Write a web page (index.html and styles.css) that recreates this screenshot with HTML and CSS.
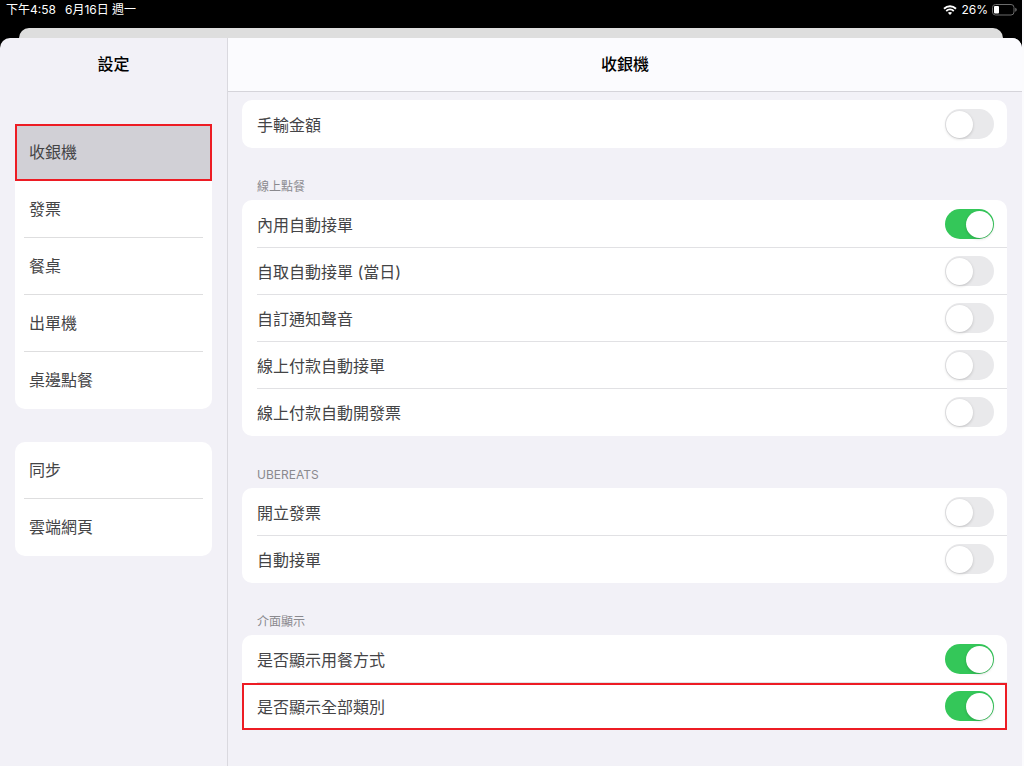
FILE: index.html
```html
<!DOCTYPE html>
<html lang="zh-Hant">
<head>
<meta charset="utf-8">
<meta name="viewport" content="width=device-width, initial-scale=1">
<title>設定</title>
<link rel="stylesheet" href="styles.css">
</head>
<body>
<div class="screen">
  <header class="status">
    <div class="status-left"><span>下午4:58</span><span>6月16日 週一</span></div>
    <div class="status-right">
      <svg class="wifi" width="14" height="10" viewBox="0 0 14 10" aria-hidden="true">
        <path d="M1 3.7C4.5.5 9.5.5 13 3.7" fill="none" stroke="#fff" stroke-width="1.9"/>
        <path d="M3.2 6C5.4 4 8.6 4 10.8 6" fill="none" stroke="#fff" stroke-width="1.8"/>
        <path d="M4.9 7.8Q7 6.1 9.1 7.8L7 9.9Z" fill="#fff"/>
      </svg>
      <span>26%</span>
      <svg class="battery" width="25" height="12" viewBox="0 0 25 12" aria-hidden="true">
        <rect x=".5" y=".5" width="21.5" height="10.5" rx="3" fill="none" stroke="#6b6b6b"/>
        <rect x="2" y="2" width="5" height="7.5" rx="1" fill="#fff"/>
        <path d="M23.2 3.8Q24.8 4.4 24.8 5.8T23.2 7.8Z" fill="#6b6b6b"/>
      </svg>
    </div>
  </header>
  <div class="back-sheet"></div>
  <div class="sheet">
    <aside class="sidebar">
      <h1 class="title">設定</h1>
      <nav class="menu">
        <div class="menu-card">
          <a class="menu-item selected" href="#pos" aria-current="page">收銀機</a>
          <a class="menu-item" href="#invoice">發票</a>
          <a class="menu-item" href="#table">餐桌</a>
          <a class="menu-item" href="#printer">出單機</a>
          <a class="menu-item" href="#tableside">桌邊點餐</a>
        </div>
        <div class="menu-card">
          <a class="menu-item" href="#sync">同步</a>
          <a class="menu-item" href="#cloud">雲端網頁</a>
        </div>
      </nav>
    </aside>
    <main class="content">
      <div class="content-bar"><h2 class="title">收銀機</h2></div>
      <div class="groups">
        <section class="card">
          <label class="row"><span class="row-inner">手輸金額<input class="switch" type="checkbox" role="switch"></span></label>
        </section>
        <h3 class="group-title">線上點餐</h3>
        <section class="card">
          <label class="row"><span class="row-inner">內用自動接單<input class="switch" type="checkbox" role="switch" checked></span></label>
          <label class="row"><span class="row-inner">自取自動接單 (當日)<input class="switch" type="checkbox" role="switch"></span></label>
          <label class="row"><span class="row-inner">自訂通知聲音<input class="switch" type="checkbox" role="switch"></span></label>
          <label class="row"><span class="row-inner">線上付款自動接單<input class="switch" type="checkbox" role="switch"></span></label>
          <label class="row"><span class="row-inner">線上付款自動開發票<input class="switch" type="checkbox" role="switch"></span></label>
        </section>
        <h3 class="group-title">UBEREATS</h3>
        <section class="card">
          <label class="row"><span class="row-inner">開立發票<input class="switch" type="checkbox" role="switch"></span></label>
          <label class="row"><span class="row-inner">自動接單<input class="switch" type="checkbox" role="switch"></span></label>
        </section>
        <h3 class="group-title">介面顯示</h3>
        <section class="card">
          <label class="row"><span class="row-inner">是否顯示用餐方式<input class="switch" type="checkbox" role="switch" checked></span></label>
          <label class="row marked"><span class="row-inner">是否顯示全部類別<input class="switch" type="checkbox" role="switch" checked></span></label>
        </section>
      </div>
    </main>
  </div>
</div>
</body>
</html>
```
FILE: styles.css
```css
* { box-sizing: border-box; }

body {
  margin: 0;
  padding-right: 2px;
  background: #fbfbfd;
  color: #444446;
  font-family: Inter, "Noto Sans CJK TC", sans-serif;
  font-size: 16px;
}

.screen {
  display: flex;
  flex-direction: column;
  min-height: 100vh;
  background: #000;
}

.status {
  display: flex;
  justify-content: space-between;
  height: 28px;
  padding: 0 5px 0 6px;
  color: #fff;
  font-size: 12px;
  line-height: 19px;
}

.status-left { display: flex; gap: 9px; }

.status-right {
  display: flex;
  align-items: center;
  gap: 4px;
  height: 19px;
}

.back-sheet {
  height: 10px;
  margin: 0 19px;
  border-radius: 10px 10px 0 0;
  background: #dedede;
}

.sheet {
  display: flex;
  flex: 1;
  overflow: hidden;
  border-radius: 10px 10px 0 0;
  background: #f2f1f7;
}

.sidebar {
  flex: none;
  width: 228px;
  border-right: 1px solid #dad9df;
}

.title {
  margin: 0;
  color: #000;
  font-size: 16px;
  font-weight: 500;
  line-height: 53px;
  text-align: center;
}

.menu {
  display: flex;
  flex-direction: column;
  gap: 33px;
  padding: 33px 15px;
}

.menu-card {
  border-radius: 10px;
  background: #fff;
}

.menu-item {
  display: block;
  position: relative;
  padding: 0 14px;
  color: inherit;
  line-height: 57px;
  text-decoration: none;
}

.menu-item:not(:last-child)::after {
  content: "";
  position: absolute;
  right: 9px;
  bottom: 0;
  left: 9px;
  height: 1px;
  background: #dededf;
}

.menu-item.selected {
  outline: 2px solid #ed1c24;
  outline-offset: -2px;
  background: #d1d0d6;
}

.menu-item.selected::after { display: none; }

.menu-card:first-child { border-radius: 0 0 10px 10px; }

.content { flex: 1; }

.content-bar {
  border-bottom: 1px solid #d5d4da;
  background: #fbfbfe;
}

.groups { padding: 8px 15px 30px 14px; }

.card {
  padding-top: 1px;
  border-radius: 10px;
  background: #fff;
}

.row {
  display: block;
  padding-left: 15px;
}

.row-inner {
  display: flex;
  align-items: center;
  justify-content: space-between;
  height: 47px;
  padding-right: 13px;
  border-bottom: 1px solid #e1e1e4;
}

.row:last-child .row-inner { border-bottom-color: transparent; }

.row.marked {
  outline: 2px solid #ed1c24;
  outline-offset: -2px;
  background: #fff;
}

.group-title {
  margin: 31px 0 5px;
  padding-left: 15px;
  color: #8a898e;
  font-size: 12px;
  font-weight: 400;
  line-height: 16px;
}

.switch {
  appearance: none;
  display: flex;
  align-items: center;
  width: 49px;
  height: 30px;
  margin: 0;
  padding: 0 1px;
  border-radius: 15px;
  background: #e9e9eb;
}

.switch::before {
  content: "";
  width: 27px;
  height: 27px;
  border-radius: 50%;
  background: #fff;
  box-shadow: 0 1px 3px rgba(0, 0, 0, 0.18);
}

.switch:checked {
  justify-content: flex-end;
  background: #34c759;
}
```
